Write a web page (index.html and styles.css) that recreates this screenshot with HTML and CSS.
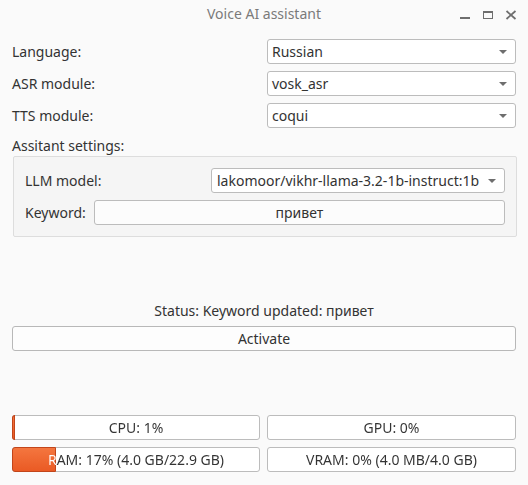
FILE: index.html
```html
<!DOCTYPE html>
<html>
<head>
<meta charset="utf-8">
<link rel="stylesheet" href="styles.css">
</head>
<body>
<div class="window">
  <div class="titlebar">
    <div class="title">Voice AI assistant</div>
    <div class="controls">
      <svg class="ctl" width="12" height="10" viewBox="0 0 12 10"><rect x="1" y="7" width="10" height="2" fill="#6e6e6e"/></svg>
      <svg class="ctl" width="12" height="10" viewBox="0 0 12 10"><rect x="1.5" y="1.5" width="9" height="7" fill="none" stroke="#6e6e6e" stroke-width="1"/><rect x="1" y="1" width="10" height="2" fill="#6e6e6e"/></svg>
      <svg class="ctl" width="12" height="10" viewBox="0 0 12 10"><path d="M1.5 1 L10.5 9 M10.5 1 L1.5 9" stroke="#6e6e6e" stroke-width="1.8" fill="none"/></svg>
    </div>
  </div>
  <div class="content">
    <div class="formgrid">
      <div class="label">Language:</div>
      <div class="combo"><span>Russian</span><span class="arrow"></span></div>
      <div class="label">ASR module:</div>
      <div class="combo"><span>vosk_asr</span><span class="arrow"></span></div>
      <div class="label">TTS module:</div>
      <div class="combo"><span>coqui</span><span class="arrow"></span></div>
    </div>
    <div class="section-label">Assitant settings:</div>
    <div class="group">
      <div class="grow">
        <div class="label glabel">LLM model:</div>
        <div class="combo llm"><span>lakomoor/vikhr-llama-3.2-1b-instruct:1b</span><span class="arrow"></span></div>
      </div>
      <div class="grow kw">
        <div class="label">Keyword:</div>
        <div class="field">привет</div>
      </div>
    </div>
    <div class="status">Status: Keyword updated: привет</div>
    <div class="button">Activate</div>
    <div class="bars">
      <div class="bar" style="--p: 1%">
        <div class="bar-fill"></div>
        <div class="bar-label">CPU: 1%</div>
      </div>
      <div class="bar" style="--p: 0%">
        <div class="bar-label">GPU: 0%</div>
      </div>
      <div class="bar" style="--p: 17.5%">
        <div class="bar-fill"></div>
        <div class="bar-label">RAM: 17% (4.0 GB/22.9 GB)</div>
      </div>
      <div class="bar" style="--p: 0%">
        <div class="bar-label">VRAM: 0% (4.0 MB/4.0 GB)</div>
      </div>
    </div>
  </div>
</div>
</body>
</html>
```
FILE: styles.css
```css
* { box-sizing: border-box; }
html, body { margin: 0; padding: 0; }
body {
  background: #fafafa;
  font-family: "Noto Sans", "Open Sans", sans-serif;
  font-size: 14px;
  color: #333333;
}
.window {
  width: 528px;
  height: 485px;
  display: flex;
  flex-direction: column;
  overflow: hidden;
}
.titlebar {
  height: 32px;
  position: relative;
  display: flex;
  justify-content: center;
}
.title {
  font-size: 14px;
  color: #7a7a7a;
  line-height: 27px;
}
.controls {
  position: absolute;
  right: 11px;
  top: 10px;
  display: flex;
  gap: 11px;
}
.ctl { display: block; }
.content {
  padding: 7px 12px 0 12px;
  display: flex;
  flex-direction: column;
}
.formgrid {
  display: grid;
  grid-template-columns: 1fr 249px;
  column-gap: 6px;
  row-gap: 7px;
}
.label {
  line-height: 25px;
  white-space: nowrap;
}
.combo {
  height: 25px;
  background: #ffffff;
  border: 1px solid #bcbcbc;
  border-radius: 3px;
  display: flex;
  align-items: center;
  justify-content: space-between;
  padding: 0 8px 0 4px;
  white-space: nowrap;
}
.arrow {
  width: 0;
  height: 0;
  border-left: 4px solid transparent;
  border-right: 4px solid transparent;
  border-top: 4px solid #6e6e6e;
}
.section-label {
  margin-top: 7px;
  height: 21px;
  line-height: 21px;
}
.group {
  background: #f5f5f5;
  border: 1px solid #dddddd;
  border-radius: 2px;
  margin-left: 1px;
  margin-right: -1px;
  padding: 11px;
  display: flex;
  flex-direction: column;
  gap: 7px;
}
.grow {
  display: flex;
  align-items: center;
  gap: 6px;
}
.grow.kw { gap: 8px; }
.glabel { flex: 1; }
.combo.llm {
  width: 294px;
  padding-left: 5px;
}
.field {
  flex: 1;
  height: 25px;
  background: #fcfcfc;
  border: 1px solid #bcbcbc;
  border-radius: 3px;
  text-align: center;
  line-height: 23px;
}
.status {
  margin-top: 64px;
  height: 20px;
  line-height: 20px;
  text-align: center;
}
.button {
  margin-top: 5px;
  height: 25px;
  background: #fdfdfd;
  border: 1px solid #b8b8b8;
  border-radius: 3px;
  text-align: center;
  line-height: 23px;
}
.bars {
  margin-top: 64px;
  display: grid;
  grid-template-columns: 248px 249px;
  column-gap: 7px;
  row-gap: 7px;
}
.bar {
  position: relative;
  height: 25px;
  background: #ffffff;
  border: 1px solid #bcbcbc;
  border-radius: 3px;
}
.bar-label {
  position: relative;
  line-height: 23px;
  text-align: center;
  white-space: nowrap;
  color: transparent;
  background: linear-gradient(to right, #ffffff var(--p), #333333 var(--p));
  -webkit-background-clip: text;
  background-clip: text;
}
.bar-fill {
  position: absolute;
  left: -1px;
  top: -1px;
  bottom: -1px;
  width: calc(var(--p) + 1px);
  min-width: 3px;
  background: linear-gradient(#f4763f, #ea5a24);
  border: 1px solid #c2451a;
  border-radius: 3px 0 0 3px;
}
```
